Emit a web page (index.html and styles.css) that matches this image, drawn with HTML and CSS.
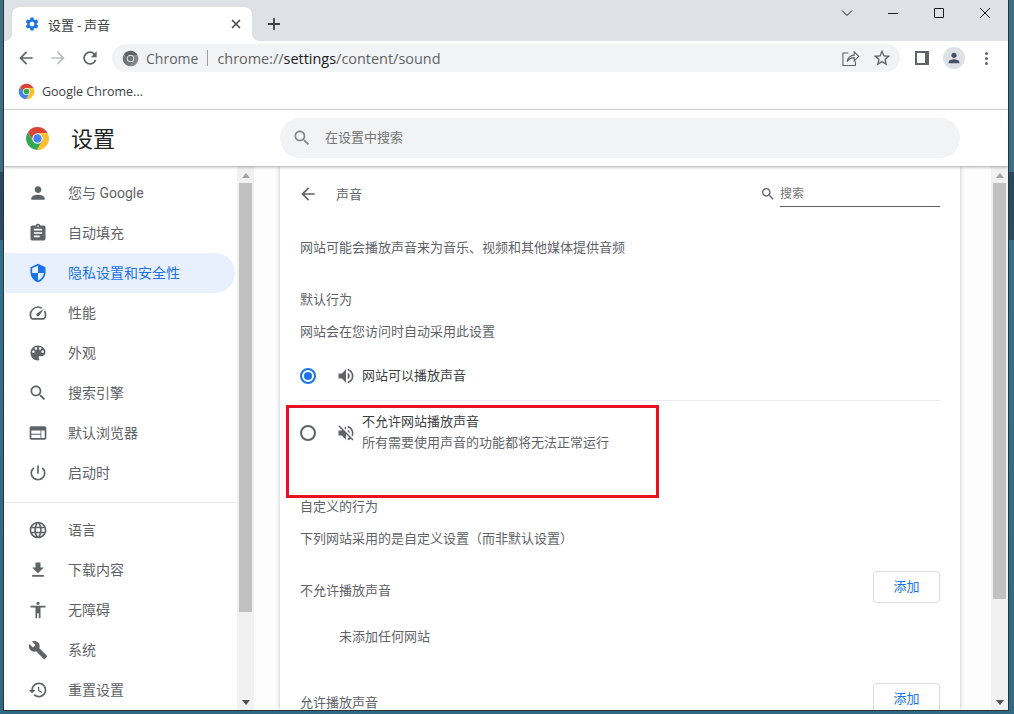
FILE: index.html
```html
<!DOCTYPE html>
<html lang="zh-CN">

<head>
    <meta charset="UTF-8">
    <title>设置 - 声音</title>
    <link rel="stylesheet" href="styles.css">
</head>

<body>
    <!-- icon sprite -->
    <svg class="sprite" xmlns="http://www.w3.org/2000/svg">
        <symbol id="i-chrome" viewBox="0 0 48 48">
            <path class="w-top" d="M24 14H43.6A22 22 0 0 0 5.54 12.03L15.34 29Z" />
            <path class="w-right" d="M32.66 29L22.86 45.97A22 22 0 0 0 43.6 14H24Z" />
            <path class="w-left" d="M15.34 29L5.54 12.03A22 22 0 0 0 22.86 45.97L32.66 29Z" />
            <circle cx="24" cy="24" r="10" fill="#fff" />
            <circle class="w-core" cx="24" cy="24" r="8" />
        </symbol>
        <symbol id="i-search" viewBox="0 0 24 24"><path d="M15.5 14h-.79l-.28-.27C15.41 12.59 16 11.11 16 9.5 16 5.91 13.09 3 9.5 3S3 5.91 3 9.5 5.91 16 9.5 16c1.61 0 3.09-.59 4.23-1.57l.27.28v.79l5 4.99L20.49 19l-4.99-5zm-6 0C7.01 14 5 11.99 5 9.5S7.01 5 9.5 5 14 7.01 14 9.5 11.99 14 9.5 14z" /></symbol>
        <symbol id="i-back" viewBox="0 0 24 24"><path d="M20 11H7.83l5.59-5.59L12 4l-8 8 8 8 1.41-1.41L7.83 13H20v-2z" /></symbol>
        <symbol id="i-person" viewBox="0 0 24 24"><path d="M12 12c2.21 0 4-1.79 4-4s-1.79-4-4-4-4 1.79-4 4 1.79 4 4 4zm0 2c-2.67 0-8 1.34-8 4v2h16v-2c0-2.66-5.33-4-8-4z" /></symbol>
    </svg>

    <div class="window">
        <div class="tabstrip">
            <div class="tab">
                <svg class="tab-icon" viewBox="0 0 24 24"><path d="M19.14 12.94c.04-.3.06-.61.06-.94 0-.32-.02-.64-.07-.94l2.03-1.58a.49.49 0 0 0 .12-.61l-1.92-3.32a.488.488 0 0 0-.59-.22l-2.39.96c-.5-.38-1.03-.7-1.62-.94l-.36-2.54a.484.484 0 0 0-.48-.41h-3.84c-.24 0-.43.17-.47.41l-.36 2.54c-.59.24-1.13.57-1.62.94l-2.39-.96c-.22-.08-.47 0-.59.22L2.74 8.87c-.12.21-.08.47.12.61l2.03 1.58c-.05.3-.09.63-.09.94s.02.64.07.94l-2.03 1.58a.49.49 0 0 0-.12.61l1.92 3.32c.12.22.37.29.59.22l2.39-.96c.5.38 1.03.7 1.62.94l.36 2.54c.05.24.24.41.48.41h3.84c.24 0 .44-.17.47-.41l.36-2.54c.59-.24 1.13-.56 1.62-.94l2.39.96c.22.08.47 0 .59-.22l1.92-3.32c.12-.22.07-.47-.12-.61l-2.01-1.58zM12 15.6c-1.98 0-3.6-1.62-3.6-3.6s1.62-3.6 3.6-3.6 3.6 1.62 3.6 3.6-1.62 3.6-3.6 3.6z" /></svg>
                <span class="tab-title">设置 - 声音</span>
                <svg class="tab-close" viewBox="0 0 10 10"><path d="M1 1L9 9M9 1L1 9" /></svg>
            </div>
            <svg class="new-tab" viewBox="0 0 12 12"><path d="M6 0V12M0 6H12" /></svg>
            <div class="win-controls">
                <svg class="win-btn" viewBox="0 0 12 12"><path d="M1 3.5L6 8.5L11 3.5" /></svg>
                <svg class="win-btn" viewBox="0 0 12 12"><path d="M1 6.5H11" /></svg>
                <svg class="win-btn" viewBox="0 0 12 12"><path d="M1.5 1.5H10.5V10.5H1.5Z" /></svg>
                <svg class="win-btn" viewBox="0 0 12 12"><path d="M1 1L11 11M11 1L1 11" /></svg>
            </div>
        </div>

        <div class="toolbar">
            <div class="tool-btn"><svg class="icon"><use href="#i-back" /></svg></div>
            <div class="tool-btn disabled"><svg class="icon flip"><use href="#i-back" /></svg></div>
            <div class="tool-btn"><svg class="icon" viewBox="0 0 24 24"><path d="M17.65 6.35C16.2 4.9 14.21 4 12 4c-4.42 0-7.99 3.58-7.99 8s3.57 8 7.99 8c3.73 0 6.84-2.55 7.73-6h-2.08c-.82 2.33-3.04 4-5.65 4-3.31 0-6-2.69-6-6s2.69-6 6-6c1.66 0 3.14.69 4.22 1.78L13 11h7V4l-2.35 2.35z" /></svg></div>
            <div class="omnibox">
                <svg class="logo-16 logo-grey"><use href="#i-chrome" /></svg>
                <span class="omni-chip">Chrome</span>
                <span class="omni-sep"></span>
                <span class="omni-url">chrome://<b>settings</b>/content/sound</span>
                <svg class="omni-icon omni-share" viewBox="0 0 24 24"><path d="M10 6H3.500V21H18.500V16M8.500 16.500C9 11.500 13 8.500 17 8.500V4.500L22.500 10L17 15.500V11.500C13.500 11.500 10.500 13 8.500 16.500Z" /></svg>
                <svg class="omni-icon" viewBox="0 0 24 24"><path d="M22 9.24l-7.19-.62L12 2 9.19 8.63 2 9.24l5.46 4.730L5.82 21 12 17.27 18.18 21l-1.63-7.03L22 9.24zM12 15.4l-3.76 2.27 1-4.28-3.32-2.88 4.38-.38L12 6.1l1.71 4.04 4.38.38-3.32 2.88 1 4.28L12 15.4z" /></svg>
            </div>
            <div class="tool-btn"><span class="side-panel"><span></span></span></div>
            <div class="tool-btn"><span class="avatar"><svg class="icon-16"><use href="#i-person" /></svg></span></div>
            <div class="tool-btn"><span class="dots"><i></i><i></i><i></i></span></div>
        </div>

        <div class="bookmarks">
            <svg class="logo-16 logo-alt"><use href="#i-chrome" /></svg>
            <span>Google Chrome...</span>
        </div>

        <header class="app-header">
            <svg class="logo-24"><use href="#i-chrome" /></svg>
            <h1>设置</h1>
            <div class="app-search">
                <svg class="icon"><use href="#i-search" /></svg>
                <span>在设置中搜索</span>
            </div>
        </header>

        <div class="content">
            <nav class="sidebar">
                <a class="nav-item"><svg class="icon"><use href="#i-person" /></svg><span>您与 Google</span></a>
                <a class="nav-item"><svg class="icon" viewBox="0 0 24 24"><path d="M19 3h-4.18C14.4 1.84 13.3 1 12 1c-1.3 0-2.4.84-2.82 2H5c-1.1 0-2 .9-2 2v14c0 1.1.9 2 2 2h14c1.1 0 2-.9 2-2V5c0-1.1-.9-2-2-2zm-7 0c.55 0 1 .45 1 1s-.45 1-1 1-1-.45-1-1 .45-1 1-1zm2 14H7v-2h7v2zm3-4H7v-2h10v2zm0-4H7V7h10v2z" /></svg><span>自动填充</span></a>
                <a class="nav-item active"><svg class="icon" viewBox="0 0 24 24"><path d="M12 1L3 5v6c0 5.55 3.84 10.74 9 12 5.16-1.26 9-6.45 9-12V5l-9-4zm0 10.99h7c-.53 4.12-3.28 7.79-7 8.94V12H5V6.3l7-3.11v8.8z" /></svg><span>隐私设置和安全性</span></a>
                <a class="nav-item"><svg class="icon" viewBox="0 0 24 24"><path d="M20.38 8.57l-1.23 1.85a8 8 0 0 1-.22 7.58H5.07A8 8 0 0 1 15.58 6.85l1.85-1.23A10 10 0 0 0 3.35 19a2 2 0 0 0 1.72 1h13.85a2 2 0 0 0 1.74-1 10 10 0 0 0-.27-10.44zm-9.79 6.84a2 2 0 0 0 2.83 0l5.66-8.49-8.49 5.66a2 2 0 0 0 0 2.83z" /></svg><span>性能</span></a>
                <a class="nav-item"><svg class="icon" viewBox="0 0 24 24"><path d="M12 3c-4.97 0-9 4.03-9 9s4.03 9 9 9c.83 0 1.5-.67 1.5-1.5 0-.39-.15-.74-.39-1.01-.23-.26-.38-.61-.38-.99 0-.83.67-1.5 1.5-1.5H16c2.76 0 5-2.24 5-5 0-4.42-4.03-8-9-8zm-5.5 9c-.83 0-1.5-.67-1.5-1.5S5.67 9 6.5 9 8 9.67 8 10.5 7.33 12 6.5 12zm3-4C8.67 8 8 7.33 8 6.5S8.67 5 9.5 5s1.5.67 1.5 1.5S10.33 8 9.5 8zm5 0c-.83 0-1.5-.67-1.5-1.5S13.67 5 14.5 5s1.5.67 1.5 1.5S15.33 8 14.5 8zm3 4c-.83 0-1.5-.67-1.5-1.5S16.67 9 17.5 9s1.500.67 1.5 1.5-.67 1.5-1.5 1.5z" /></svg><span>外观</span></a>
                <a class="nav-item"><svg class="icon"><use href="#i-search" /></svg><span>搜索引擎</span></a>
                <a class="nav-item"><svg class="icon" viewBox="0 0 24 24"><path d="M20 4H4c-1.1 0-1.99.9-1.99 2L2 18c0 1.1.9 2 2 2h16c1.1 0 2-.9 2-2V6c0-1.100-.9-2-2-2zm-5 14H4v-4h11v4zm0-5H4V9h11v4zm5 5h-4V9h4v9z" /></svg><span>默认浏览器</span></a>
                <a class="nav-item"><svg class="icon" viewBox="0 0 24 24"><path d="M13 3h-2v10h2V3zm4.83 2.17l-1.42 1.42C17.99 7.86 19 9.81 19 12c0 3.87-3.13 7-7 7s-7-3.13-7-7c0-2.19 1.01-4.14 2.58-5.42L6.17 5.17C4.23 6.82 3 9.26 3 12c0 4.97 4.03 9 9 9s9-4.03 9-9c0-2.74-1.23-5.18-3.17-6.83z" /></svg><span>启动时</span></a>
                <div class="nav-divider"></div>
                <a class="nav-item"><svg class="icon" viewBox="0 0 24 24"><path d="M11.99 2C6.47 2 2 6.48 2 12s4.47 10 9.99 10C17.52 22 22 17.52 22 12S17.52 2 11.99 2zm6.93 6h-2.95c-.32-1.25-.78-2.45-1.38-3.56 1.84.63 3.37 1.91 4.33 3.56zM12 4.04c.83 1.2 1.48 2.53 1.91 3.96h-3.82c.43-1.43 1.08-2.76 1.91-3.96zM4.26 14C4.1 13.36 4 12.69 4 12s.1-1.36.26-2h3.38c-.08.66-.14 1.32-.14 2 0 .68.06 1.34.14 2H4.26zm.82 2h2.95c.32 1.25.78 2.45 1.38 3.56-1.84-.63-3.37-1.9-4.33-3.56zm2.95-8H5.08c.96-1.66 2.49-2.93 4.33-3.56C8.81 5.55 8.35 6.75 8.03 8zM12 19.96c-.83-1.2-1.48-2.53-1.91-3.96h3.82c-.43 1.43-1.08 2.76-1.91 3.96zM14.34 14H9.66c-.09-.66-.16-1.32-.16-2 0-.68.07-1.35.16-2h4.68c.09.65.16 1.32.16 2 0 .68-.07 1.34-.16 2zm.25 5.56c.6-1.11 1.06-2.31 1.38-3.56h2.95c-.96 1.65-2.49 2.93-4.33 3.56zM16.36 14c.08-.66.14-1.32.14-2 0-.68-.06-1.34-.14-2h3.38c.16.64.26 1.31.26 2s-.1 1.36-.26 2h-3.38z" /></svg><span>语言</span></a>
                <a class="nav-item"><svg class="icon" viewBox="0 0 24 24"><path d="M19 9h-4V3H9v6H5l7 7 7-7zM5 18v2h14v-2H5z" /></svg><span>下载内容</span></a>
                <a class="nav-item"><svg class="icon" viewBox="0 0 24 24"><path d="M12 2c1.1 0 2 .9 2 2s-.9 2-2 2-2-.9-2-2 .9-2 2-2zm9 7h-6v13h-2v-6h-2v6H9V9H3V7h18v2z" /></svg><span>无障碍</span></a>
                <a class="nav-item"><svg class="icon" viewBox="0 0 24 24"><path d="M22.7 19l-9.1-9.1c.9-2.3.4-5-1.5-6.9-2-2-5-2.4-7.4-1.3L9 6 6 9 1.6 4.7C.4 7.1.9 10.1 2.9 12.1c1.9 1.9 4.6 2.4 6.9 1.5l9.1 9.1c.4.4 1 .4 1.4 0l2.3-2.3c.5-.4.5-1.1.1-1.4z" /></svg><span>系统</span></a>
                <a class="nav-item"><svg class="icon" viewBox="0 0 24 24"><path d="M13 3c-4.97 0-9 4.03-9 9H1l3.89 3.89.07.14L9 12H6c0-3.87 3.13-7 7-7s7 3.13 7 7-3.13 7-7 7c-1.93 0-3.68-.79-4.94-2.06l-1.42 1.42C8.27 19.99 10.51 21 13 21c4.97 0 9-4.03 9-9s-4.03-9-9-9zm-1 5v5l4.28 2.54.72-1.21-3.5-2.08V8H12z" /></svg><span>重置设置</span></a>
            </nav>

            <div class="scrollbar">
                <span class="arrow-up"></span>
                <span class="thumb thumb-left"></span>
                <span class="arrow-down"></span>
            </div>

            <main class="main">
                <section class="card">
                    <div class="sub-head">
                        <svg class="icon"><use href="#i-back" /></svg>
                        <span class="sub-title">声音</span>
                        <svg class="icon-16 sub-search-icon"><use href="#i-search" /></svg>
                        <span class="sub-search">搜索</span>
                    </div>

                    <p class="line desc">网站可能会播放声音来为音乐、视频和其他媒体提供音频</p>
                    <p class="line heading heading-default">默认行为</p>
                    <p class="line sub">网站会在您访问时自动采用此设置</p>

                    <div class="radio-row first">
                        <span class="radio checked"></span>
                        <svg class="icon row-icon" viewBox="0 0 24 24"><path d="M3 9v6h4l5 5V4L7 9H3zm13.5 3c0-1.77-1.02-3.29-2.5-4.03v8.05c1.48-.73 2.5-2.25 2.5-4.02zM14 3.23v2.06c2.89.86 5 3.54 5 6.71s-2.11 5.85-5 6.71v2.06c4.01-.91 7-4.49 7-8.77s-2.99-7.86-7-8.77z" /></svg>
                        <span class="row-label">网站可以播放声音</span>
                    </div>
                    <div class="radio-row second">
                        <span class="radio"></span>
                        <svg class="icon row-icon" viewBox="0 0 24 24"><path d="M16.5 12c0-1.77-1.02-3.29-2.5-4.03v2.21l2.45 2.45c.03-.2.05-.41.05-.63zm2.5 0c0 .94-.2 1.82-.54 2.64l1.51 1.51C20.63 14.91 21 13.5 21 12c0-4.28-2.99-7.86-7-8.77v2.06c2.89.86 5 3.54 5 6.71zM4.27 3L3 4.27 7.73 9H3v6h4l5 5v-6.73l4.25 4.25c-.67.52-1.42.93-2.25 1.18v2.06c1.38-.31 2.63-.95 3.69-1.81L19.73 21 21 19.73l-9-9L4.27 3zM12 4L9.91 6.09 12 8.18V4z" /></svg>
                        <div>
                            <div class="row-title">不允许网站播放声音</div>
                            <div class="row-sub">所有需要使用声音的功能都将无法正常运行</div>
                        </div>
                    </div>

                    <p class="line heading heading-custom">自定义的行为</p>
                    <p class="line sub">下列网站采用的是自定义设置（而非默认设置）</p>

                    <div class="site-row block-row">
                        <span class="site-label">不允许播放声音</span>
                        <button class="add-btn">添加</button>
                    </div>
                    <p class="line empty">未添加任何网站</p>
                    <div class="site-row allow-row">
                        <span class="site-label">允许播放声音</span>
                        <button class="add-btn">添加</button>
                    </div>

                    <div class="highlight"></div>
                </section>
            </main>

            <div class="scrollbar">
                <span class="arrow-up"></span>
                <span class="thumb thumb-right"></span>
                <span class="arrow-down"></span>
            </div>
        </div>
    </div>
</body>

</html>
```

FILE: styles.css
```css
* {
    box-sizing: border-box;
}

body {
    margin: 0;
    height: 714px;
    overflow: hidden;
    padding: 0 6px 4px 4px;
    font-family: Roboto, "Noto Sans CJK SC", sans-serif;
    font-size: 13px;
    color: #5f6368;
    background: linear-gradient(#3d6f82 0, #3d7084 172px, #27485c 172px, #2a4d62 240px, #33708c 240px, #2f6a82 100%);
}

.sprite {
    display: none;
}

svg {
    fill: currentColor;
    flex-shrink: 0;
}

.w-top {
    fill: var(--top, #db4437);
}

.w-right {
    fill: var(--right, #fbc02d);
}

.w-left {
    fill: var(--left, #34a853);
}

.w-core {
    fill: var(--core, #4285f4);
}

.logo-alt {
    --left: #4285f4;
    --core: #34a853;
}

.logo-grey {
    --top: #5f6368;
    --right: #80868b;
    --left: #70757a;
    --core: #70757a;
}

.window {
    height: 710px;
    display: flex;
    flex-direction: column;
    background-color: white;
    box-shadow: 0 0 0 1px #2a3238;
}

.icon {
    width: 20px;
    height: 20px;
}

.icon-16 {
    width: 16px;
    height: 16px;
}

.flip {
    transform: scaleX(-1);
}

.logo-16 {
    width: 17px;
    height: 17px;
}

.logo-24 {
    width: 25px;
    height: 25px;
}

/* tab strip */
.tabstrip {
    height: 41px;
    flex-shrink: 0;
    display: flex;
    align-items: flex-start;
    padding-left: 8px;
    background-color: #dee1e6;
}

.tab {
    position: relative;
    width: 240px;
    height: 34px;
    margin-top: 7px;
    padding: 0 11px 0 12px;
    display: flex;
    align-items: center;
    background-color: white;
    border-radius: 8px 8px 0 0;
}

.tab::before,
.tab::after {
    content: "";
    position: absolute;
    bottom: 0;
    width: 8px;
    height: 8px;
}

.tab::before {
    left: -8px;
    background: radial-gradient(circle at 0 0, transparent 8px, white 8px);
}

.tab::after {
    right: -8px;
    background: radial-gradient(circle at 100% 0, transparent 8px, white 8px);
}

.tab-icon {
    width: 16px;
    height: 16px;
    color: #1a73e8;
}

.tab-title {
    margin-left: 8px;
    flex: 1;
    color: #3c4043;
    font-size: 13px;
}

.tab-close {
    width: 10px;
    height: 10px;
    fill: none;
    stroke: #45494d;
    stroke-width: 1.6;
}

.new-tab {
    width: 12px;
    height: 12px;
    margin: 18px 0 0 16px;
    fill: none;
    stroke: #3c4043;
    stroke-width: 1.8;
}

.win-controls {
    margin-left: auto;
    padding: 7px 17px 0 0;
    display: flex;
    gap: 34px;
}

.win-btn {
    width: 12px;
    height: 12px;
    fill: none;
    stroke: #1c1c1c;
    stroke-width: 1;
}

/* toolbar */
.toolbar {
    height: 34px;
    flex-shrink: 0;
    display: flex;
    align-items: center;
    padding: 0 6px;
}

.tool-btn {
    width: 32px;
    height: 32px;
    display: flex;
    align-items: center;
    justify-content: center;
    color: #5f6368;
}

.tool-btn.disabled {
    color: #bcbdbf;
}

.omnibox {
    flex: 1;
    height: 28px;
    margin: 0 6px;
    padding: 0 8px 0 10px;
    display: flex;
    align-items: center;
    border-radius: 14px;
    background-color: #f1f3f4;
    font-family: "Open Sans", "Noto Sans CJK SC", sans-serif;
    font-size: 14px;
}

.omni-chip {
    margin-left: 7px;
}

.omni-sep {
    width: 1px;
    height: 16px;
    margin: 0 9px;
    background-color: #9aa0a6;
}

.omni-url {
    flex: 1;
    white-space: nowrap;
    font-size: 14.45px;
}

.omni-url b {
    font-weight: 400;
    color: #202124;
}

.omni-icon {
    width: 20px;
    height: 20px;
    margin-left: 12px;
}

.omni-share {
    fill: none;
    stroke: #5f6368;
    stroke-width: 1.3;
}

.side-panel {
    width: 14px;
    height: 14px;
    display: block;
    padding: 2px 4px 2px 2px;
    background-color: #5f6368;
}

.side-panel span {
    display: block;
    height: 100%;
    background-color: white;
}

.avatar {
    width: 22px;
    height: 22px;
    display: flex;
    align-items: center;
    justify-content: center;
    border-radius: 50%;
    background-color: #dee1e6;
    color: #45526a;
}

.dots {
    display: flex;
    flex-direction: column;
    gap: 2px;
}

.dots i {
    width: 3px;
    height: 3px;
    border-radius: 50%;
    background-color: #5f6368;
}

/* bookmarks */
.bookmarks {
    height: 35px;
    flex-shrink: 0;
    display: flex;
    align-items: center;
    gap: 7px;
    padding: 0 0 1px 14px;
    border-bottom: 1px solid #dadce0;
    color: #3c4043;
    font-family: "Open Sans", "Noto Sans CJK SC", sans-serif;
    font-size: 12.5px;
}

/* settings header */
.app-header {
    position: relative;
    z-index: 1;
    height: 56px;
    flex-shrink: 0;
    display: flex;
    align-items: center;
    padding-left: 21px;
    background-color: white;
    box-shadow: 0 1px 3px rgba(60, 64, 67, 0.45);
}

.app-header h1 {
    width: 209px;
    margin: 0 0 2px 21px;
    font-size: 22px;
    font-weight: 400;
    color: #202124;
}

.app-search {
    width: 680px;
    height: 40px;
    display: flex;
    align-items: center;
    gap: 13px;
    padding-left: 12px;
    border-radius: 20px;
    background-color: #f1f3f4;
    color: #757575;
}

.app-search span {
    margin-bottom: 3px;
}

.app-search .icon {
    color: #80868b;
}

/* content */
.content {
    flex: 1;
    min-height: 0;
    display: flex;
}

.sidebar {
    width: 233px;
    flex-shrink: 0;
    padding-top: 7px;
    overflow: hidden;
}

.nav-item {
    width: 230px;
    height: 40px;
    margin-left: 1px;
    padding-left: 23px;
    display: flex;
    align-items: center;
    gap: 20px;
    border-radius: 0 20px 20px 0;
    font-size: 14px;
    color: #5f6368;
}

.nav-item span {
    margin-bottom: 2px;
}

.nav-item.active {
    background-color: #e8f0fe;
    color: #1a73e8;
}

.nav-divider {
    height: 1px;
    margin: 9px 0 7px;
    background-color: #e8eaed;
}

.scrollbar {
    width: 17px;
    flex-shrink: 0;
    display: flex;
    flex-direction: column;
    align-items: center;
    background-color: #f1f1f1;
}

.arrow-up {
    margin: 7px 0 5px;
    border: 4px solid transparent;
    border-top: 0;
    border-bottom: 5px solid #a3a3a3;
}

.arrow-down {
    margin-top: auto;
    margin-bottom: 5px;
    border: 4px solid transparent;
    border-bottom: 0;
    border-top: 5px solid #505050;
}

.thumb {
    width: 13px;
    background-color: #c1c1c1;
}

.thumb-left {
    height: 429px;
}

.thumb-right {
    height: 416px;
}

.main {
    flex: 1;
    min-width: 0;
    padding-left: 26px;
    overflow: hidden;
    background-color: #fdfdfe;
}

.card {
    position: relative;
    width: 680px;
    height: 100%;
    padding: 0 20px;
    background-color: white;
    box-shadow: 0 0 4px rgba(60, 64, 67, 0.35);
}

.sub-head {
    height: 56px;
    display: flex;
    align-items: center;
}

.sub-head .icon {
    margin-left: -2px;
}

.sub-title {
    margin: 0 0 2px 18px;
}

.sub-search-icon {
    margin-left: auto;
}

.sub-search {
    width: 160px;
    height: 26px;
    margin-left: 4px;
    padding-top: 1px;
    line-height: 24px;
    border-bottom: 1px solid #5f6368;
    color: #757575;
    font-size: 12px;
}

.line {
    margin: 0;
    line-height: 20px;
}

.desc {
    margin-top: 16px;
}

.heading-default {
    margin-top: 32px;
}

.sub {
    margin-top: 12px;
}

.radio-row {
    display: flex;
    align-items: center;
}

.radio-row.first {
    height: 49px;
    margin-top: 10px;
    border-bottom: 1px solid #e8eaed;
}

.radio-row.second {
    height: 64px;
}

.radio {
    width: 16px;
    height: 16px;
    margin-right: 20px;
    padding: 2px;
    border: 2px solid #5f6368;
    border-radius: 50%;
    background-clip: content-box;
}

.radio.checked {
    border-color: #1a73e8;
    background-color: #1a73e8;
}

.row-icon {
    margin-right: 6px;
}

.row-label {
    margin-bottom: 4px;
    color: #3c4043;
}

.row-title {
    line-height: 20px;
    color: #3c4043;
}

.row-sub {
    line-height: 20px;
    margin: 1px 0;
}

.heading-custom {
    margin-top: 32px;
}

.site-row {
    display: flex;
    justify-content: space-between;
    align-items: flex-start;
}

.block-row {
    margin-top: 22px;
}

.allow-row {
    margin-top: 36px;
}

.site-label {
    margin-top: 10px;
    line-height: 20px;
}

.add-btn {
    width: 67px;
    height: 32px;
    padding: 0 0 3px;
    border: 1px solid #dadce0;
    border-radius: 4px;
    background-color: white;
    color: #1a73e8;
    font-family: inherit;
    font-size: 13px;
}

.empty {
    margin-top: 24px;
    padding-left: 39px;
}

.highlight {
    position: absolute;
    left: 6px;
    top: 239px;
    width: 373px;
    height: 93px;
    border: 3px solid #e81123;
}
```
